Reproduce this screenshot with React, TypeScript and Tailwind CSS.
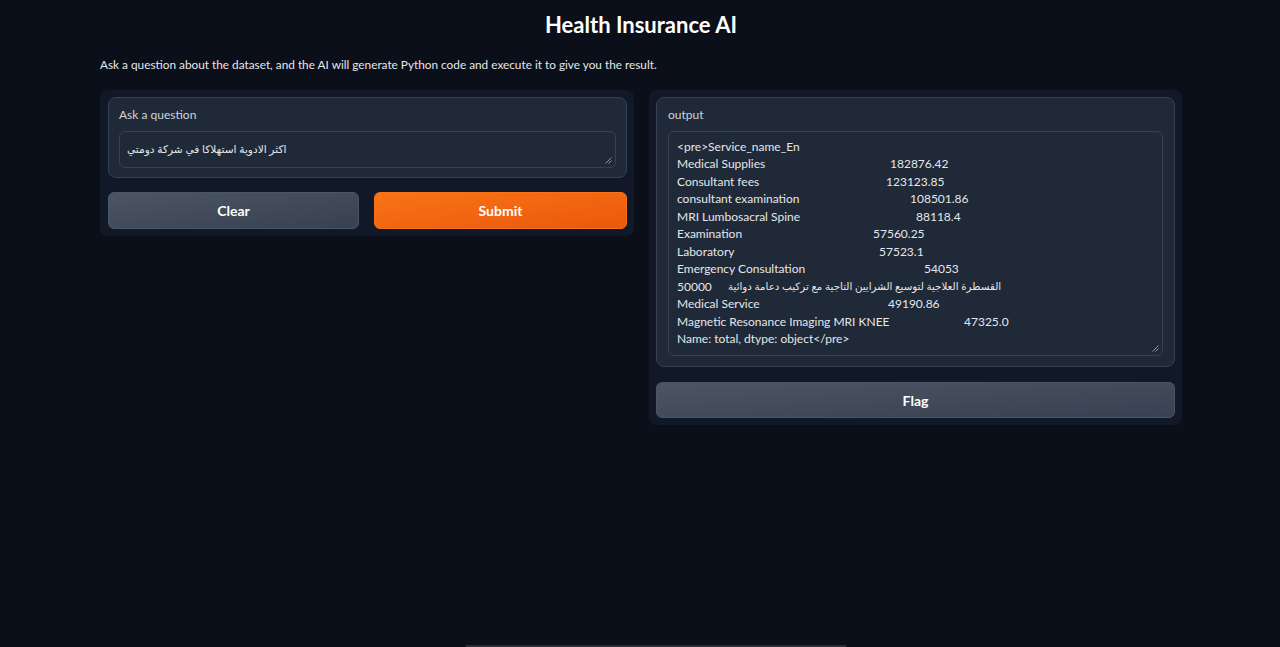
import React from 'react';

const ROWS: { name: string; value: string; x: number; rtl?: boolean }[] = [
  { name: 'Medical Supplies', value: '182876.42', x: 213 },
  { name: 'Consultant fees', value: '123123.85', x: 209 },
  { name: 'consultant examination', value: '108501.86', x: 233 },
  { name: 'MRI Lumbosacral Spine', value: '88118.4', x: 239 },
  { name: 'Examination', value: '57560.25', x: 196 },
  { name: 'Laboratory', value: '57523.1', x: 202 },
  { name: 'Emergency Consultation', value: '54053', x: 247 },
  { name: '50000', value: 'القسطرة العلاجية لتوسيع الشرايين التاجية مع تركيب دعامة دوائية', x: 51, rtl: true },
  { name: 'Medical Service', value: '49190.86', x: 211 },
  { name: 'Magnetic Resonance Imaging MRI KNEE', value: '47325.0', x: 287 },
];

function Grip() {
  return (
    <svg className="absolute right-[3px] bottom-[3px] h-[7px] w-[7px]" viewBox="0 0 7 7">
      <path d="M6.5 0.5 L0.5 6.5 M6.5 3.5 L3.5 6.5" stroke="#9ca3af" strokeWidth="0.9" />
    </svg>
  );
}

export default function App() {
  return (
    <div className="min-h-screen bg-[#0b0f19] text-[#e5e7eb] font-['Lato','DejaVu_Sans',sans-serif]">
      <div className="w-[1082px] ml-[100px]">
        <h1 className="pt-[11px] text-center text-[22px] leading-[28px] font-bold text-white">
          Health Insurance AI
        </h1>
        <p className="mt-[17px] text-[11.8px] leading-[18px] text-[#e5e7eb]">
          Ask a question about the dataset, and the AI will generate Python code and execute it to give you the result.
        </p>

        <div className="mt-[16px] grid grid-cols-[534px_533px] gap-[15px] items-start">
          {/* Left column */}
          <div className="rounded-lg bg-[#111827] pl-[8px] pr-[7px] pt-[7px] pb-[7px]">
            <div className="rounded-lg border border-[#374151] bg-[#1f2937] px-[10px] pt-[8px] pb-[9px]">
              <div className="text-[12px] leading-[18px] text-[#d1d5db]">Ask a question</div>
              <div className="relative mt-[7px] h-[37px] rounded-md border border-[#374151] bg-[#1f2937] px-[7px] pt-[8px] text-[10.6px] leading-[18px]">
                <span>اكثر الادوية استهلاكا في شركة دومتي</span>
                <Grip />
              </div>
            </div>
            <div className="mt-[14px] grid grid-cols-[251px_253px] gap-[15px]">
              <button className="h-[37px] rounded-md border border-[#4b5563] bg-gradient-to-br from-[#4b5563] to-[#374151] text-[14px] font-bold text-white">
                Clear
              </button>
              <button className="h-[37px] rounded-md border border-[#f97316] bg-gradient-to-br from-[#f97316] to-[#ea580c] text-[14px] font-bold text-white">
                Submit
              </button>
            </div>
          </div>

          {/* Right column */}
          <div className="rounded-lg bg-[#111827] px-[7px] pt-[7px] pb-[7px]">
            <div className="rounded-lg border border-[#374151] bg-[#1f2937] px-[11px] pt-[8px] pb-[10px]">
              <div className="text-[12px] leading-[18px] text-[#d1d5db]">output</div>
              <div className="relative mt-[7px] h-[225px] rounded-md border border-[#374151] bg-[#1f2937] pl-[8px] pt-[6px] text-[12px] leading-[17.45px]">
                <div>&lt;pre&gt;Service_name_En</div>
                {ROWS.map((r) => (
                  <div key={r.name} className="flex whitespace-nowrap">
                    <span className="shrink-0" style={{ width: r.x }}>{r.name}</span>
                    <span dir={r.rtl ? 'rtl' : undefined} className={r.rtl ? 'text-[10.3px]' : undefined}>
                      {r.value}
                    </span>
                  </div>
                ))}
                <div>Name: total, dtype: object&lt;/pre&gt;</div>
                <Grip />
              </div>
            </div>
            <button className="mt-[15px] h-[36px] w-full rounded-md border border-[#4b5563] bg-gradient-to-br from-[#4b5563] to-[#374151] text-[14px] font-bold text-white">
              Flag
            </button>
          </div>
        </div>
      </div>
      <div className="fixed bottom-0 left-[466px] h-[2px] w-[380px] bg-[#2b2e34]" />
    </div>
  );
}
